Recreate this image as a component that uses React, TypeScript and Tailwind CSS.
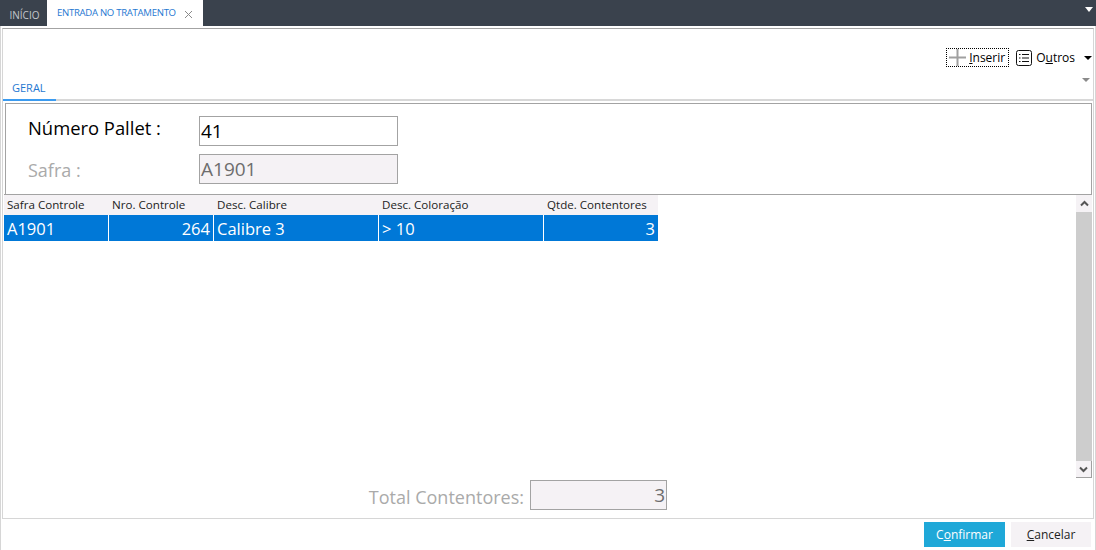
import React from 'react'

const font = { fontFamily: '"Open Sans", "Noto Sans", sans-serif' }

const columns = [
  { title: 'Safra Controle', value: 'A1901', width: 'w-[104px]', right: false },
  { title: 'Nro. Controle', value: '264', width: 'w-[104px]', right: true },
  { title: 'Desc. Calibre', value: 'Calibre 3', width: 'w-[164px]', right: false },
  { title: 'Desc. Coloração', value: '> 10', width: 'w-[164px]', right: false },
  { title: 'Qtde. Contentores', value: '3', width: 'w-[114px]', right: true },
]

function Caret({ className }: { className: string }) {
  return <div className={`w-0 h-0 border-x-transparent ${className}`} />
}

export default function App() {
  return (
    <div style={font} className="w-[1096px] h-[550px] bg-white flex flex-col overflow-hidden text-black">
      {/* top tabs */}
      <div className="h-[26px] shrink-0 bg-[#3a424d] flex items-stretch">
        <div className="w-[47px] flex items-center justify-center text-[10px] text-[#c4c8cc] pt-[4px] pl-[2px]">INÍCIO</div>
        <div className="w-[156px] bg-white flex items-center pl-[10px] pt-[1px] text-[9.6px] text-[#1f78d1]">
          <span className="tracking-[-0.3px] whitespace-nowrap">ENTRADA NO TRATAMENTO</span>
          <svg width="9" height="9" viewBox="0 0 9 9" className="ml-[8px] mt-[1px]">
            <path d="M1 1l7 7M8 1L1 8" stroke="#8a8a8a" strokeWidth="1" fill="none" />
          </svg>
        </div>
        <div className="ml-auto pr-[3px] pt-[7px]">
          <Caret className="border-x-4 border-t-[5px] border-t-white" />
        </div>
      </div>

      <div className="flex-1 flex flex-col border-x border-x-[#d6d6d6]">
        {/* window */}
        <div className="mt-[2px] mx-[1px] h-[491px] shrink-0 border-t border-t-[#a3a3a3] border-x border-x-[#d6d6d6] border-b border-b-[#d6d6d6] flex flex-col">
          {/* toolbar */}
          <div className="h-[39px] pt-[19px] flex justify-end items-start pr-[1px] shrink-0">
            <div className="h-[19px] w-[63px] border border-dotted border-black flex items-center pl-[2px] text-[12px]">
              <svg width="17" height="17" viewBox="0 0 17 17" className="shrink-0">
                <path d="M0 8.5h17M8.5 0v17" stroke="#a0a0a0" strokeWidth="2" fill="none" />
              </svg>
              <span className="ml-[3px]"><u>I</u>nserir</span>
            </div>
            <div className="h-[19px] ml-[7px] flex items-center text-[12px]">
              <svg width="16" height="16" viewBox="0 0 16 16" className="shrink-0">
                <rect x="0.5" y="0.5" width="15" height="15" rx="2" stroke="#111" fill="none" />
                <path d="M6 4.5h7M6 8h7M6 11.5h7" stroke="#111" fill="none" />
                <path d="M3 4.5h1.5M3 8h1.5M3 11.5h1.5" stroke="#111" fill="none" />
              </svg>
              <span className="ml-[4px]">O<u>u</u>tros</span>
              <Caret className="ml-[9px] border-x-4 border-t-4 border-t-black" />
            </div>
          </div>

          {/* subtabs */}
          <div className="h-[33px] shrink-0 border-b-2 border-b-[#d8d8d8] relative flex">
            <div className="w-[53px] h-[33px] border-b-2 border-b-[#3b9bf0] pl-[9px] pt-[13px] text-[11px] leading-[14px] text-[#1f78d1]">GERAL</div>
            <Caret className="absolute right-[3px] top-[10px] border-x-4 border-t-4 border-t-[#8a8a8a]" />
          </div>

          {/* form */}
          <div className="h-[91px] shrink-0 mt-[2px] ml-[2px] mr-[1px] border-t border-x border-[#a3a3a3] flex flex-col pt-[12px] gap-[8px]">
            <div className="flex items-center h-[30px]">
              <div className="w-[193px] pl-[22px] text-[18.4px] leading-[24px] -mt-[6px] whitespace-nowrap">Número Pallet :</div>
              <div className="w-[199px] h-[30px] border border-[#a3a3a3] bg-white text-[19px] leading-[28px] pl-[1px]">41</div>
            </div>
            <div className="flex items-center h-[30px]">
              <div className="w-[193px] pl-[22px] text-[18px] leading-[24px] mt-[1px] text-[#aaaaaa]">Safra :</div>
              <div className="w-[199px] h-[30px] border border-[#a3a3a3] bg-[#f5f2f5] text-[19px] leading-[29px] pl-[1px] text-[#6d6d6d]">A1901</div>
            </div>
          </div>

          {/* grid */}
          <div className="flex h-[285px] shrink-0 ml-[1px] mr-[1px] border-t border-[#a3a3a3]">
            <div className="flex-1 flex flex-col">
              <div className="flex gap-[1px] h-[20px] bg-[#f5f2f5] w-[654px]">
                {columns.map((c) => (
                  <div key={c.title} className={`${c.width} shrink-0 text-[11.6px] leading-[19px] pl-[3px] text-[#222] whitespace-nowrap`}>
                    {c.title}
                  </div>
                ))}
              </div>
              <div className="flex gap-[1px] h-[26px] w-[654px]">
                {columns.map((c) => (
                  <div
                    key={c.title}
                    className={`${c.width} shrink-0 bg-[#0078d7] text-white text-[16.5px] leading-[27px] ${c.right ? 'text-right pr-[3px]' : 'pl-[3px]'}`}
                  >
                    {c.value}
                  </div>
                ))}
              </div>
            </div>
            {/* scrollbar */}
            <div className="w-[16px] shrink-0 mb-[1px] flex flex-col bg-[#cdcdcd]">
              <div className="h-[17px] bg-[#f5f2f5] flex items-center justify-center">
                <svg width="9" height="7" viewBox="0 0 9 7"><path d="M1 5.5l3.5-3.5 3.5 3.5" stroke="#555" strokeWidth="2" fill="none" /></svg>
              </div>
              <div className="flex-1" />
              <div className="h-[17px] bg-[#f5f2f5] border-r border-b border-[#a0a0a0] flex items-center justify-center">
                <svg width="9" height="7" viewBox="0 0 9 7"><path d="M1 1.5l3.5 3.5 3.5-3.5" stroke="#555" strokeWidth="2" fill="none" /></svg>
              </div>
            </div>
          </div>

          {/* total */}
          <div className="flex items-center h-[30px] mt-[1px] shrink-0">
            <div className="w-[521px] text-right text-[18px] leading-[28px] pt-[4px] text-[#aaaaaa] whitespace-nowrap">Total Contentores:</div>
            <div className="ml-[6px] w-[137px] h-[30px] border border-[#a3a3a3] bg-[#f5f2f5] text-[19px] leading-[29px] text-right pr-[1px] text-[#6d6d6d]">3</div>
          </div>
        </div>

        {/* footer */}
        <div className="flex justify-end gap-[6px] pr-[4px] mt-[3px]">
          <div className="w-[81px] h-[25px] bg-[#1fa8d8] text-white text-[12px] leading-[25px] text-center">
            C<u>o</u>nfirmar
          </div>
          <div className="w-[80px] h-[25px] bg-[#f5f2f5] text-[#222] text-[12px] leading-[25px] text-center">
            <u>C</u>ancelar
          </div>
        </div>
      </div>
    </div>
  )
}
